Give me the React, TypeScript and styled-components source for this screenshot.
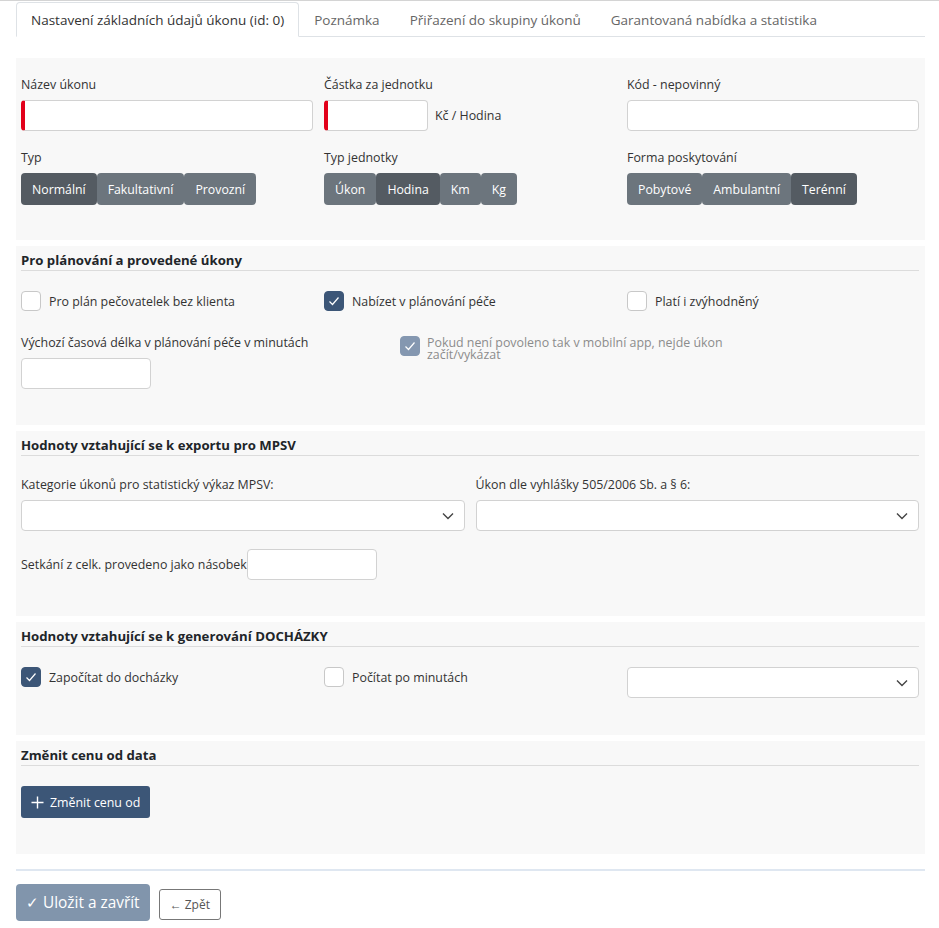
import styled, { createGlobalStyle } from "styled-components";

const GlobalStyle = createGlobalStyle`
  body {
    margin: 0;
    background: #ffffff;
    font-family: "Open Sans", "Noto Sans", sans-serif;
    color: #212529;
  }
  * { box-sizing: border-box; }
`;

const Page = styled.div`
  border-top: 1px solid #d4d4d4;
  padding: 1px 14px 0 16px;
`;

const TabBar = styled.div`
  display: flex;
  border-bottom: 1px solid #dee2e6;
  height: 35px;
`;

const Tab = styled.div<{ active?: boolean }>`
  padding: 0 14px;
  display: flex;
  align-items: center;
  font-size: 13.5px;
  color: ${(p) => (p.active ? "#333" : "#666")};
  background: ${(p) => (p.active ? "#fff" : "transparent")};
  border: 1px solid ${(p) => (p.active ? "#dee2e6" : "transparent")};
  border-bottom-color: ${(p) => (p.active ? "#fff" : "transparent")};
  border-radius: 4px 4px 0 0;
  margin-bottom: -1px;
`;

const Panel = styled.div<{ pt?: number; pb: number }>`
  background: #f8f8f8;
  padding: ${(p) => p.pt ?? 6}px 6px ${(p) => p.pb}px 5px;
  margin-top: 6px;
`;

const FirstPanel = styled(Panel)`
  margin-top: 21px;
`;

const SectionTitle = styled.div`
  font-size: 13.2px;
  line-height: 17px;
  font-weight: 700;
  color: #212529;
  padding-bottom: 1px;
  border-bottom: 1px solid #dcdcdc;
  margin-bottom: 20px;
`;

const Grid3 = styled.div<{ mt?: number }>`
  display: grid;
  grid-template-columns: 1fr 1fr 1fr;
  column-gap: 11px;
  margin-top: ${(p) => p.mt ?? 0}px;
  align-items: start;
`;

const Grid2 = styled.div`
  display: grid;
  grid-template-columns: 1fr 1fr;
  column-gap: 11px;
`;

const Label = styled.div`
  font-size: 12.4px;
  color: #333;
  line-height: 18px;
  margin-bottom: 6px;
`;

const Input = styled.div<{ required?: boolean; width?: number }>`
  height: 31px;
  width: ${(p) => (p.width ? `${p.width}px` : "100%")};
  flex: none;
  background: #fff;
  border: 1px solid #d2d2d2;
  border-left: ${(p) => (p.required ? "4px solid #e2001a" : "1px solid #d2d2d2")};
  border-radius: 4px;
`;

const InlineRow = styled.div<{ gap: number; mt?: number }>`
  display: flex;
  align-items: center;
  gap: ${(p) => p.gap}px;
  margin-top: ${(p) => p.mt ?? 0}px;
  font-size: 12.4px;
  color: #333;
`;

const Select = styled.div`
  height: 31px;
  background: #fff;
  border: 1px solid #d2d2d2;
  border-radius: 4px;
  display: flex;
  align-items: center;
  justify-content: flex-end;
  padding-right: 9px;
`;

const Segments = styled.div`
  display: flex;
`;

const Segment = styled.div<{ active?: boolean }>`
  height: 32px;
  padding: 0 11px;
  display: flex;
  align-items: center;
  font-size: 12.3px;
  color: #fff;
  background: ${(p) => (p.active ? "#545b62" : "#6c757d")};
  border-radius: 4px;
`;

const Check = styled.div<{ checked?: boolean; disabled?: boolean }>`
  width: 20px;
  height: 20px;
  flex: none;
  border-radius: 4px;
  border: 1px solid ${(p) => (p.checked ? (p.disabled ? "#8497b0" : "#3c5677") : "#c8c8c8")};
  background: ${(p) => (p.checked ? (p.disabled ? "#8497b0" : "#3c5677") : "#fff")};
  display: flex;
  align-items: center;
  justify-content: center;
`;

const CheckRow = styled.div`
  display: flex;
  align-items: center;
  gap: 8px;
  font-size: 12.4px;
  color: #333;
`;

const DisabledRow = styled.div`
  display: flex;
  align-items: flex-start;
  gap: 7px;
  margin-top: 2px;
`;

const DisabledText = styled.div`
  font-size: 12.4px;
  line-height: 12px;
  color: #8c8c8c;
  max-width: 300px;
  padding-top: 1px;
`;

const SplitRow = styled.div`
  display: grid;
  grid-template-columns: 379px 1fr;
  margin-top: 23px;
`;

const PrimaryButton = styled.div`
  display: inline-flex;
  align-items: center;
  gap: 6px;
  height: 32px;
  padding: 0 10px;
  background: #3c5677;
  color: #fff;
  border-radius: 3px;
  font-size: 12.4px;
`;

const Footer = styled.div`
  margin-top: 15px;
  border-top: 2px solid #dfe7f1;
  padding-top: 13px;
  display: flex;
  align-items: flex-start;
  gap: 9px;
`;

const SaveButton = styled.div`
  height: 37px;
  padding: 0 10px;
  display: flex;
  align-items: center;
  background: #8195ac;
  color: #fff;
  border-radius: 4px;
  font-size: 15.4px;
`;

const BackButton = styled.div`
  margin-top: 5px;
  height: 31px;
  padding: 0 10px;
  display: flex;
  align-items: center;
  border: 1px solid #777;
  border-radius: 3px;
  font-size: 12px;
  color: #555;
`;

const Tick = ({ color = "#fff" }: { color?: string }) => (
  <svg width="14" height="14" viewBox="0 0 14 14">
    <path d="M2.5 7.5 L5.5 10.5 L11.5 3.5" fill="none" stroke={color} strokeWidth="1.2" />
  </svg>
);

const Chevron = () => (
  <svg width="14" height="14" viewBox="0 0 14 14">
    <path d="M2 4.5 L7 9.5 L12 4.5" fill="none" stroke="#444" strokeWidth="1.4" />
  </svg>
);

const Plus = () => (
  <svg width="13" height="13" viewBox="0 0 13 13">
    <path d="M6.5 0.5 V12.5 M0.5 6.5 H12.5" stroke="#fff" strokeWidth="1.4" />
  </svg>
);

export default function App() {
  return (
    <>
      <GlobalStyle />
      <Page>
        <TabBar>
          <Tab active>Nastavení základních údajů úkonu (id: 0)</Tab>
          <Tab>Poznámka</Tab>
          <Tab>Přiřazení do skupiny úkonů</Tab>
          <Tab>Garantovaná nabídka a statistika</Tab>
        </TabBar>

        <FirstPanel pt={18} pb={35}>
          <Grid3>
            <div>
              <Label>Název úkonu</Label>
              <Input required />
            </div>
            <div>
              <Label>Částka za jednotku</Label>
              <InlineRow gap={7}>
                <Input required width={104} />
                <span>Kč / Hodina</span>
              </InlineRow>
            </div>
            <div>
              <Label>Kód - nepovinný</Label>
              <Input />
            </div>
          </Grid3>
          <Grid3 mt={18}>
            <div>
              <Label>Typ</Label>
              <Segments>
                <Segment active>Normální</Segment>
                <Segment>Fakultativní</Segment>
                <Segment>Provozní</Segment>
              </Segments>
            </div>
            <div>
              <Label>Typ jednotky</Label>
              <Segments>
                <Segment>Úkon</Segment>
                <Segment active>Hodina</Segment>
                <Segment>Km</Segment>
                <Segment>Kg</Segment>
              </Segments>
            </div>
            <div>
              <Label>Forma poskytování</Label>
              <Segments>
                <Segment>Pobytové</Segment>
                <Segment>Ambulantní</Segment>
                <Segment active>Terénní</Segment>
              </Segments>
            </div>
          </Grid3>
        </FirstPanel>

        <Panel pb={36}>
          <SectionTitle>Pro plánování a provedené úkony</SectionTitle>
          <Grid3>
            <CheckRow>
              <Check />
              Pro plán pečovatelek bez klienta
            </CheckRow>
            <CheckRow>
              <Check checked>
                <Tick />
              </Check>
              Nabízet v plánování péče
            </CheckRow>
            <CheckRow>
              <Check />
              Platí i zvýhodněný
            </CheckRow>
          </Grid3>
          <SplitRow>
            <div>
              <Label>Výchozí časová délka v plánování péče v minutách</Label>
              <Input width={130} />
            </div>
            <DisabledRow>
              <Check checked disabled>
                <Tick />
              </Check>
              <DisabledText>Pokud není povoleno tak v mobilní app, nejde úkon začít/vykázat</DisabledText>
            </DisabledRow>
          </SplitRow>
        </Panel>

        <Panel pb={36}>
          <SectionTitle>Hodnoty vztahující se k exportu pro MPSV</SectionTitle>
          <Grid2>
            <div>
              <Label>Kategorie úkonů pro statistický výkaz MPSV:</Label>
              <Select>
                <Chevron />
              </Select>
            </div>
            <div>
              <Label>Úkon dle vyhlášky 505/2006 Sb. a § 6:</Label>
              <Select>
                <Chevron />
              </Select>
            </div>
          </Grid2>
          <InlineRow gap={0} mt={18}>
            <span>Setkání z celk. provedeno jako násobek</span>
            <Input width={130} />
          </InlineRow>
        </Panel>

        <Panel pb={37}>
          <SectionTitle>Hodnoty vztahující se k generování DOCHÁZKY</SectionTitle>
          <Grid3>
            <CheckRow>
              <Check checked>
                <Tick />
              </Check>
              Započítat do docházky
            </CheckRow>
            <CheckRow>
              <Check />
              Počítat po minutách
            </CheckRow>
            <Select>
              <Chevron />
            </Select>
          </Grid3>
        </Panel>

        <Panel pb={36}>
          <SectionTitle>Změnit cenu od data</SectionTitle>
          <PrimaryButton>
            <Plus />
            Změnit cenu od
          </PrimaryButton>
        </Panel>

        <Footer>
          <SaveButton>✓ Uložit a zavřít</SaveButton>
          <BackButton>← Zpět</BackButton>
        </Footer>
      </Page>
    </>
  );
}
